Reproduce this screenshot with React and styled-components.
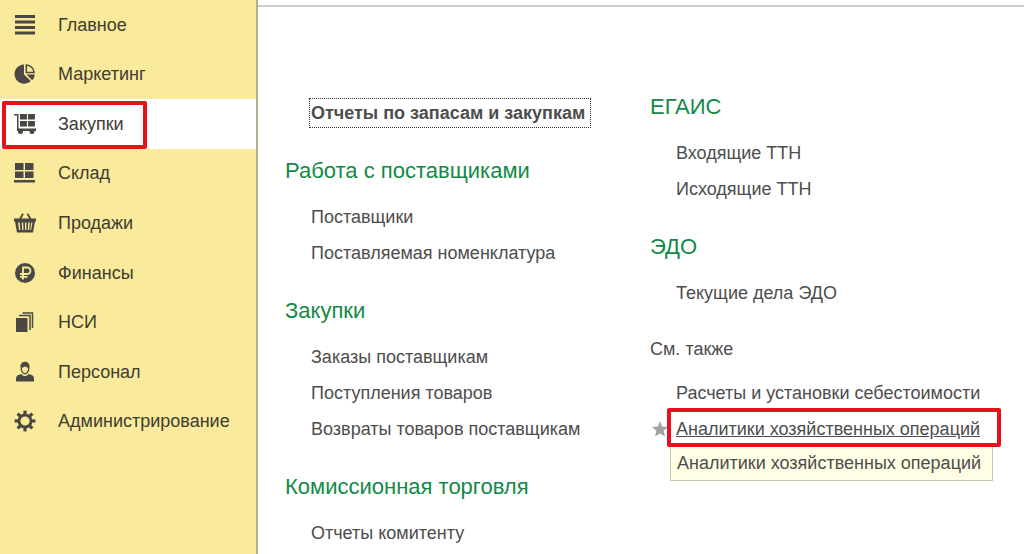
// IMPORTS
// react
import React from 'react';
// styled components
import styled, { createGlobalStyle } from 'styled-components';

// ICONS
const ListIcon = () => (
    <Icon viewBox="0 0 22 22">
        <path d="M1 1h20v3H1zM1 6.5h20v3H1zM1 12h20v3H1zM1 17.5h20v3H1z" />
    </Icon>
);

const PieIcon = () => (
    <Icon viewBox="0 0 22 22">
        <path d="M10 1.5A9.6 9.6 0 1 0 16.8 18L10 11.500z" />
        <path d="M12.3 2a8 8 0 0 1 7.8 7.500h-7.8z" fill="none" stroke="#4b4742" strokeWidth="1.5" />
        <path d="M12.5 11.5h8.300a9 9 0 0 1-2.600 5.800z" />
    </Icon>
);

const CartIcon = () => (
    <Icon viewBox="0 0 22 22">
        <path d="M0 1h4.5v14.5H22V18H3V2.5H0z" />
        <path d="M6 1h7v5.500H6zM14 1h7v5.500h-7zM6 8h7v5.500H6zM14 8h7v5.500h-7z" />
        <circle cx="6.5" cy="18.5" r="2.5" />
        <circle cx="18" cy="18.5" r="2.5" />
    </Icon>
);

const StoreIcon = () => (
    <Icon viewBox="0 0 22 22">
        <path d="M1 1h8.5v7H1zM11 1h8.5v7H11zM1 9.5h8.5V16H1zM11 9.5h8.5V16H11zM0 18h21v2.5H0z" />
    </Icon>
);

const BasketIcon = () => (
    <Icon viewBox="0 0 22 22">
        <path d="M5.5 8 9 1.8M17 8 13.5 1.8" fill="none" stroke="#4b4742" strokeWidth="1.8" />
        <path
            fillRule="evenodd"
            d="M0 6.5h22v3h-1L19 20.5H3L1 9.5H0zM4 10.5l1 7.5h1.4l-.8-7.5zM7.7 10.5l.5 7.5h1.3l-.3-7.5zM11 10.5V18h1.3l.2-7.5zM14.3 10.5l-.5 7.5h1.3l.8-7.5zM17.3 10.5l-1 7.5h.8l1.4-7.5z"
        />
    </Icon>
);

const RubleIcon = () => (
    <Icon viewBox="0 0 22 22">
        <circle cx="11" cy="11" r="10" />
        <path
            d="M9 17.5V5.5h4.2a3.200 3.200 0 0 1 0 6.500H6M6 14.8h7.5"
            fill="none"
            stroke="#f9eb9b"
            strokeWidth="1.8"
        />
    </Icon>
);

const BooksIcon = () => (
    <Icon viewBox="0 0 22 22">
        <path d="M2 7h11.5v14H2z" />
        <path d="M5 4.5h11V19M8.5 2h10v15" fill="none" stroke="#4b4742" strokeWidth="1.5" />
    </Icon>
);

const PersonIcon = () => (
    <Icon viewBox="0 0 22 22">
        <path d="M2 20.5v-3c0-2.500 1.500-3.500 4-4l1.500-.5C8.500 14.500 9.500 15 11 15s2.500-.5 3.500-2l1.500.5c2.500.5 4 1.500 4 4v3z" />
        <path
            fillRule="evenodd"
            d="M11 .8c3 0 4.600 2 4.600 5.200 0 3.800-2 7.500-4.600 7.500S6.400 9.800 6.400 6C6.400 2.800 8 .8 11 .8zM7.800 6.500c0 3 1.400 5.700 3.200 5.700s3.200-2.700 3.200-5.700c-1.500 0-2.500-.5-3.200-1.300-.7.8-1.700 1.300-3.200 1.300z"
        />
    </Icon>
);

const GearIcon = () => (
    <Icon viewBox="0 0 22 22">
        <circle cx="11" cy="11" r="6" fill="none" stroke="#4b4742" strokeWidth="2.8" />
        {[0, 45, 90, 135, 180, 225, 270, 315].map(angle => (
            <path key={angle} d="M9.4.6h3.2v4H9.4z" transform={`rotate(${angle} 11 11)`} />
        ))}
    </Icon>
);

// DATA
const menu = [
    { title: 'Главное', icon: ListIcon },
    { title: 'Маркетинг', icon: PieIcon },
    { title: 'Закупки', icon: CartIcon, active: true },
    { title: 'Склад', icon: StoreIcon },
    { title: 'Продажи', icon: BasketIcon },
    { title: 'Финансы', icon: RubleIcon },
    { title: 'НСИ', icon: BooksIcon },
    { title: 'Персонал', icon: PersonIcon },
    { title: 'Администрирование', icon: GearIcon },
];

const leftSections = [
    { title: 'Работа с поставщиками', links: ['Поставщики', 'Поставляемая номенклатура'] },
    { title: 'Закупки', links: ['Заказы поставщикам', 'Поступления товаров', 'Возвраты товаров поставщикам'] },
    { title: 'Комиссионная торговля', links: ['Отчеты комитенту'] },
];

const rightSections = [
    { title: 'ЕГАИС', links: ['Входящие ТТН', 'Исходящие ТТН'] },
    { title: 'ЭДО', links: ['Текущие дела ЭДО'] },
];

// COMPONENTS
const LinkSection = ({ title, links }) => (
    <Section>
        <Heading>{title}</Heading>
        {links.map(link => (
            <LinkRow key={link}>
                <PageLink href="#">{link}</PageLink>
            </LinkRow>
        ))}
    </Section>
);

const App = () => {
    return (
        <Page>
            <GlobalStyle />
            <Sidebar>
                {menu.map(({ title, icon: ItemIcon, active }) => (
                    <MenuItem key={title} href="#" $active={active}>
                        <ItemIcon />
                        {title}
                        {active && <MenuMark />}
                    </MenuItem>
                ))}
            </Sidebar>
            <Content>
                <ReportsColumn>
                    <Section>
                        <LinkRow>
                            <FocusedLink href="#">Отчеты по запасам и закупкам</FocusedLink>
                        </LinkRow>
                    </Section>
                    {leftSections.map(section => (
                        <LinkSection key={section.title} {...section} />
                    ))}
                </ReportsColumn>
                <Column>
                    {rightSections.map(section => (
                        <LinkSection key={section.title} {...section} />
                    ))}
                    <Section>
                        <SeeAlso>См. также</SeeAlso>
                        <LinkRow>
                            <PageLink href="#">Расчеты и установки себестоимости</PageLink>
                        </LinkRow>
                        <LinkRow>
                            <Star viewBox="0 0 16 16">
                                <path d="M8 0l2.2 5.4 5.8.5-4.4 3.8L13 15.5l-5-3.100-5 3.100 1.400-5.800L0 5.900l5.800-.5z" />
                            </Star>
                            <HoveredLink href="#">
                                Аналитики хозяйственных операций
                                <Tooltip role="tooltip">Аналитики хозяйственных операций</Tooltip>
                                <LinkMark />
                            </HoveredLink>
                        </LinkRow>
                    </Section>
                </Column>
            </Content>
        </Page>
    );
};

// STYLED COMPONENTS
const GlobalStyle = createGlobalStyle`
    * {
        box-sizing: border-box;
    }

    body {
        margin: 0;
        background-color: #FFF;
        color: #4d4d4d;
        font-family: "Liberation Sans", Arial, sans-serif;
        font-size: 18px;
        line-height: 22px;
    }
`

const Page = styled.div`
    display: flex;
    height: 100vh;
    overflow: hidden;
`

const Sidebar = styled.nav`
    flex: 0 0 258px;
    display: grid;
    grid-template-rows: repeat(9, 1fr);
    align-self: stretch;
    padding-bottom: 108px;
    background-color: #f9eb9b;
    border-right: 2px solid #b5b08c;
`

const MenuItem = styled.a`
    position: relative;
    display: flex;
    align-items: center;
    gap: 22px;
    padding-left: 14px;
    color: #403c30;
    text-decoration: none;
    background-color: ${props => (props.$active ? '#FFF' : 'transparent')};
`

const Icon = styled.svg`
    flex: none;
    width: 22px;
    height: 22px;
    fill: #4b4742;
`

// red frames drawn over the content
const Mark = styled.span`
    position: absolute;
    border: 4px solid #e8101a;
    border-radius: 2px;
    pointer-events: none;
`

const MenuMark = styled(Mark)`
    top: 2px;
    bottom: 0;
    left: 2px;
    width: 145px;
`

const Content = styled.main`
    flex: 1;
    display: grid;
    grid-template-columns: 1fr 1fr;
    align-items: start;
    margin-top: 5px;
    padding: 72px 9px 0 27px;
    border-top: 2px solid #cbcbcb;
`

const Column = styled.div`
    display: flex;
    flex-direction: column;
    gap: 12px;
`

const ReportsColumn = styled(Column)`
    padding-top: 16px;
`

const Section = styled.section`
    display: flex;
    flex-direction: column;
`

const Heading = styled.h2`
    margin: 0;
    color: #128a46;
    font-size: 22px;
    font-weight: normal;
    line-height: 56px;
`

const SeeAlso = styled.h3`
    margin: 0;
    font-size: 18px;
    font-weight: normal;
    line-height: 52px;
`

const LinkRow = styled.div`
    position: relative;
    display: flex;
    align-items: center;
    height: 36px;
    padding-left: 26px;
`

const PageLink = styled.a`
    color: inherit;
    text-decoration: none;
    white-space: nowrap;
`

const FocusedLink = styled(PageLink)`
    margin-left: -2px;
    padding: 3px 5px 3px 1px;
    border: 1px dotted #333;
    font-weight: bold;
`

const HoveredLink = styled(PageLink)`
    position: relative;
    text-decoration: underline;
`

const LinkMark = styled(Mark)`
    top: -10px;
    right: -21px;
    bottom: -7px;
    left: -9px;
`

const Tooltip = styled.span`
    position: absolute;
    top: 28px;
    left: -6px;
    display: inline-block;
    padding: 5px 11px 6px 6px;
    border: 1px solid #c8c8b4;
    background-color: #ffffe6;
    text-decoration: none;
`

const Star = styled.svg`
    position: absolute;
    left: 2px;
    width: 16px;
    height: 16px;
    fill: #a3a3a3;
`

// EXPORT
export default App;
